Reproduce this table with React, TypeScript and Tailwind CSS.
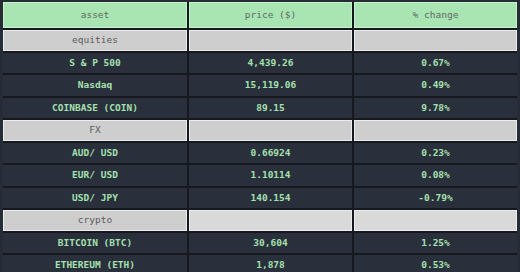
import React from "react";

type Row =
  | { kind: "section"; label: string; light?: boolean }
  | { kind: "data"; asset: string; price: string; change: string };

const rows: Row[] = [
  { kind: "section", label: "equities" },
  { kind: "data", asset: "S & P 500", price: "4,439.26", change: "0.67%" },
  { kind: "data", asset: "Nasdaq", price: "15,119.06", change: "0.49%" },
  { kind: "data", asset: "COINBASE (COIN)", price: "89.15", change: "9.78%" },
  { kind: "section", label: "FX" },
  { kind: "data", asset: "AUD/ USD", price: "0.66924", change: "0.23%" },
  { kind: "data", asset: "EUR/ USD", price: "1.10114", change: "0.08%" },
  { kind: "data", asset: "USD/ JPY", price: "140.154", change: "-0.79%" },
  { kind: "section", label: "crypto", light: true },
  { kind: "data", asset: "BITCOIN (BTC)", price: "30,604", change: "1.25%" },
  { kind: "data", asset: "ETHEREUM (ETH)", price: "1,878", change: "0.53%" },
];

const font = { fontFamily: '"DejaVu Sans Mono", "Liberation Mono", monospace' };

export default function App() {
  return (
    <div className="w-[520px] h-[272px] overflow-hidden bg-[#262c36] pl-[3px] pt-[2px]" style={font}>
      <div className="w-[514px] grid grid-cols-[184px_163px_163px] gap-[2px] bg-[#15181e] text-[9.5px]">
        {/* en-tête */}
        {["asset", "price ($)", "% change"].map((h) => (
          <div
            key={h}
            className="h-[26px] flex items-center justify-center bg-[#a9e5b3] border border-[#c6f2cc] text-[#5d6b61]"
          >
            {h}
          </div>
        ))}

        {rows.map((r, i) =>
          r.kind === "section" ? (
            <React.Fragment key={i}>
              <div className="h-[20.5px] flex items-center justify-center bg-[#cecece] border border-[#ececec] text-[#5a5a5a]">
                {r.label}
              </div>
              <div
                className={`h-[20.5px] border border-[#ececec] ${r.light ? "bg-[#d9d9d9]" : "bg-[#cecece]"}`}
              ></div>
              <div
                className={`h-[20.5px] border border-[#ececec] ${r.light ? "bg-[#d9d9d9]" : "bg-[#cecece]"}`}
              ></div>
            </React.Fragment>
          ) : (
            <React.Fragment key={i}>
              <div className="h-[20.5px] flex items-center justify-center bg-[#29303c] text-[#a6e0ae] font-bold">
                {r.asset}
              </div>
              <div className="h-[20.5px] flex items-center justify-center bg-[#29303c] text-[#a6e0ae] font-bold">
                {r.price}
              </div>
              <div className="h-[20.5px] flex items-center justify-center bg-[#29303c] text-[#a6e0ae] font-bold">
                {r.change}
              </div>
            </React.Fragment>
          )
        )}
      </div>
    </div>
  );
}
